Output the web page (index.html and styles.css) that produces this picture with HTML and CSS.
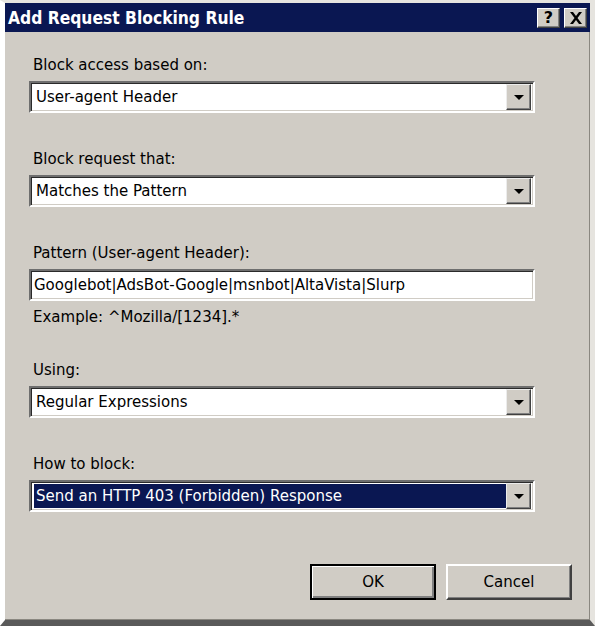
FILE: index.html
```html
<!DOCTYPE html>
<html lang="en">
<head>
    <meta charset="UTF-8">
    <title>Add Request Blocking Rule</title>
    <link rel="stylesheet" href="styles.css">
</head>
<body>
    <div class="dialog">
        <div class="titlebar">
            <span class="title">Add Request Blocking Rule</span>
            <div class="caption-buttons">
                <span class="cap-btn">?</span>
                <span class="cap-btn">
                    <svg width="14" height="12" viewBox="0 0 14 12"><path d="M1 0h3l3 4 3-4h3L8.5 6 13 12h-3L7 8l-3 4H1l4.5-6z" fill="#000"/></svg>
                </span>
            </div>
        </div>
        <div class="content">
            <div class="group">
                <label>Block access based on:</label>
                <div class="combo"><span class="value">User-agent Header</span><span class="arrow"></span></div>
            </div>
            <div class="group">
                <label>Block request that:</label>
                <div class="combo"><span class="value">Matches the Pattern</span><span class="arrow"></span></div>
            </div>
            <div class="group pattern">
                <label>Pattern (User-agent Header):</label>
                <div class="textbox">Googlebot|AdsBot-Google|msnbot|AltaVista|Slurp</div>
                <p class="hint">Example: ^Mozilla/[1234].*</p>
            </div>
            <div class="group">
                <label>Using:</label>
                <div class="combo"><span class="value">Regular Expressions</span><span class="arrow"></span></div>
            </div>
            <div class="group">
                <label>How to block:</label>
                <div class="combo"><span class="value selected">Send an HTTP 403 (Forbidden) Response</span><span class="arrow"></span></div>
            </div>
            <div class="actions">
                <button class="btn default">OK</button>
                <button class="btn">Cancel</button>
            </div>
        </div>
    </div>
</body>
</html>
```
FILE: styles.css
```css
html, body {
    margin: 0;
    padding: 0;
}
body {
    font-family: "DejaVu Sans", sans-serif;
    font-size: 15px;
    color: #000;
    background: #fff;
}
.dialog {
    width: 595px;
    height: 626px;
    box-sizing: border-box;
    background: #d0ccc5;
    border-top: 3px solid #e6e4df;
    border-left: 5px solid #fff;
    border-right: 5px solid #e6e4df;
    border-bottom: 6px solid #5a5a5a;
    box-shadow: inset -1px -1px 0 #8a8780;
    display: flex;
    flex-direction: column;
}
.titlebar {
    height: 29px;
    background: #0a1752;
    display: flex;
    align-items: center;
    justify-content: space-between;
    padding: 0 3px 0 3px;
}
.title {
    color: #fff;
    font-family: "DejaVu Sans Condensed", "DejaVu Sans", sans-serif;
    font-weight: bold;
    font-size: 17.3px;
}
.caption-buttons {
    display: flex;
    gap: 4px;
}
.cap-btn {
    width: 23px;
    height: 20px;
    box-sizing: border-box;
    background: #d0ccc5;
    border-top: 1px solid #fff;
    border-left: 1px solid #fff;
    border-right: 1px solid #404040;
    border-bottom: 1px solid #404040;
    box-shadow: inset -1px -1px 0 #808080;
    display: flex;
    align-items: center;
    justify-content: center;
    font-weight: bold;
    font-size: 16px;
}
.content {
    flex: 1;
    padding: 24px 0 0 24px;
    display: flex;
    flex-direction: column;
}
.group {
    margin-bottom: 37px;
}
.group label {
    display: block;
    height: 18px;
    line-height: 18px;
    margin-bottom: 7px;
    padding-left: 4px;
}
.combo, .textbox {
    width: 506px;
    height: 32px;
    box-sizing: border-box;
    background: #fff;
    border-top: 2px solid #6e6e6e;
    border-left: 2px solid #6e6e6e;
    border-right: 2px solid #fff;
    border-bottom: 2px solid #fff;
    box-shadow: inset 1px 1px 0 #2a2a2a, inset -1px -1px 0 #d0ccc5;
    display: flex;
    align-items: center;
    padding: 0 3px 0 3px;
}
.combo .value {
    flex: 1;
    height: 24px;
    line-height: 24px;
    padding-left: 2px;
}
.combo .selected {
    background: #0a1752;
    color: #fff;
}
.arrow {
    width: 25px;
    height: 26px;
    box-sizing: border-box;
    background: #d0ccc5;
    border-top: 1px solid #ececec;
    border-left: 1px solid #ececec;
    border-right: 1px solid #404040;
    border-bottom: 1px solid #404040;
    box-shadow: inset -1px -1px 0 #808080;
    position: relative;
    margin-right: -1px;
}
.arrow::after {
    content: "";
    position: absolute;
    left: 7px;
    top: 10px;
    border-left: 5px solid transparent;
    border-right: 5px solid transparent;
    border-top: 5px solid #000;
}
.textbox {
    padding-left: 3px;
}
.pattern {
    margin-bottom: 35px;
}
.hint {
    margin: 7px 0 0 4px;
    height: 18px;
    line-height: 18px;
}
.actions {
    margin-top: 15px;
    padding-left: 281px;
    display: flex;
    gap: 10px;
}
.btn {
    width: 126px;
    height: 36px;
    box-sizing: border-box;
    background: #d0ccc5;
    font-family: inherit;
    font-size: 15px;
    color: #000;
    border-top: 2px solid #fff;
    border-left: 2px solid #fff;
    border-right: 2px solid #404040;
    border-bottom: 2px solid #404040;
    box-shadow: inset -1px -1px 0 #808080;
    padding: 0;
}
.btn.default {
    border: 2px solid #000;
    box-shadow: inset 1px 1px 0 #fff, inset -2px -2px 0 #808080;
}
```
